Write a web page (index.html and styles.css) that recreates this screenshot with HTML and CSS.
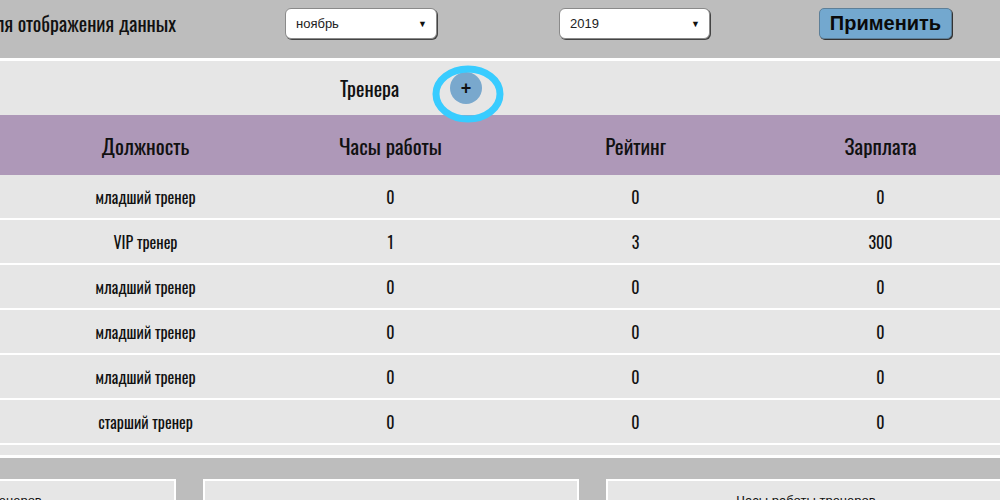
FILE: index.html
```html
<!DOCTYPE html>
<html lang="ru">
<head>
<meta charset="utf-8">
<title>Тренера</title>
<link rel="stylesheet" href="styles.css">
</head>
<body>
<div class="page">
  <header class="topbar">
    <div class="period"><span>Период для отображения данных</span></div>
    <div class="select select-month"><span>ноябрь</span><span class="arrow">▼</span></div>
    <div class="select select-year"><span>2019</span><span class="arrow">▼</span></div>
    <button class="apply">Применить</button>
  </header>

  <section class="trainers">
    <div class="title-row">
      <h2 class="title">Тренера</h2>
      <button class="add">+</button>
      <svg class="ring" width="80" height="66" viewBox="0 0 80 66" aria-hidden="true">
        <ellipse cx="39" cy="33" rx="32" ry="25" fill="none" stroke="#38ccff" stroke-width="7"/>
      </svg>
    </div>
    <table class="grid">
      <colgroup>
        <col class="c0"><col class="c"><col class="c"><col class="c"><col class="c">
      </colgroup>
      <thead>
        <tr><th></th><th>Должность</th><th>Часы работы</th><th>Рейтинг</th><th>Зарплата</th></tr>
      </thead>
      <tbody>
        <tr><td></td><td class="pos">младший тренер</td><td>0</td><td>0</td><td>0</td></tr>
        <tr><td></td><td class="pos">VIP тренер</td><td>1</td><td>3</td><td>300</td></tr>
        <tr><td></td><td class="pos">младший тренер</td><td>0</td><td>0</td><td>0</td></tr>
        <tr><td></td><td class="pos">младший тренер</td><td>0</td><td>0</td><td>0</td></tr>
        <tr><td></td><td class="pos">младший тренер</td><td>0</td><td>0</td><td>0</td></tr>
        <tr><td></td><td class="pos">старший тренер</td><td>0</td><td>0</td><td>0</td></tr>
      </tbody>
    </table>
  </section>

  <section class="charts">
    <div class="card card-1"><p>Рейтинг тренеров</p></div>
    <div class="card card-2"><p></p></div>
    <div class="card card-3"><p>Часы работы тренеров</p></div>
  </section>
</div>
</body>
</html>
```

FILE: styles.css
```css
html, body {
  margin: 0;
  padding: 0;
  overflow: hidden;
  background: #bdbdbd;
}
.page {
  width: 1000px;
  height: 500px;
  overflow: hidden;
  font-family: "Oswald", "Liberation Sans Narrow", "DejaVu Sans Condensed", "Roboto", sans-serif;
  color: #111;
}

/* top bar */
.topbar {
  height: 58px;
  background: #bdbdbd;
  display: flex;
  align-items: flex-start;
  padding-top: 8px;
  box-sizing: border-box;
}
.period {
  width: 176px;
  flex: none;
  display: flex;
  justify-content: flex-end;
  white-space: nowrap;
  font-size: 20px;
  line-height: 31px;
  color: #111;
}
.select {
  flex: none;
  box-sizing: border-box;
  height: 31px;
  background: #fff;
  border: 1px solid #8a8a8a;
  border-radius: 6px;
  box-shadow: 1px 1px 0 #444;
  display: flex;
  align-items: center;
  justify-content: space-between;
  padding: 0 9px 0 10px;
  font-family: "Liberation Sans", Arial, sans-serif;
  font-size: 13px;
  color: #222;
}
.select .arrow {
  font-size: 9px;
  color: #111;
}
.select-month { width: 152px; margin-left: 109px; }
.select-year { width: 151px; margin-left: 122px; }
.apply {
  flex: none;
  margin-left: 109px;
  width: 133px;
  height: 31px;
  box-sizing: border-box;
  background: #73a8cf;
  border: 1px solid #5d7f98;
  border-radius: 5px;
  box-shadow: 1px 1px 0 #333;
  font-family: "Liberation Sans", Arial, sans-serif;
  font-weight: bold;
  font-size: 20px;
  color: #0a0a0a;
  padding: 0;
}

/* trainers section */
.trainers {
  background: #e6e6e6;
  border-top: 3px solid #fff;
  border-bottom: 3px solid #fff;
  padding-bottom: 10px;
}
.title-row {
  position: relative;
  height: 54px;
  display: flex;
  align-items: center;
  padding-left: 340px;
}
.title {
  margin: 0;
  font-size: 20px;
  font-weight: normal;
  width: 110px;
}
.add {
  width: 32px;
  height: 32px;
  border-radius: 50%;
  border: none;
  background: #79a8cd;
  color: #111;
  font-family: "Liberation Sans", Arial, sans-serif;
  font-weight: bold;
  font-size: 18px;
  line-height: 32px;
  padding: 0;
  margin-top: -1px;
}
.ring {
  position: absolute;
  left: 429px;
  top: 0;
  z-index: 2;
}

.grid {
  border-collapse: collapse;
  table-layout: fixed;
  width: 1003px;
}
.grid col.c0 { width: 23px; }
.grid col.c { width: 245px; }
.grid th {
  background: #ae98b8;
  height: 60px;
  padding: 0;
  font-weight: normal;
  font-size: 21px;
  text-align: center;
}
.grid td {
  height: 43px;
  padding: 0;
  border-bottom: 2px solid #fff;
  text-align: center;
  font-size: 16px;
}

/* charts */
.charts {
  display: flex;
  gap: 27px;
  padding-top: 21px;
  margin-left: -200px;
}
.card {
  flex: none;
  box-sizing: border-box;
  width: 376px;
  height: 80px;
  background: #e6e6e6;
  border: 2px solid #fff;
}
.card-3 { width: 400px; }
.card p {
  margin: 12px 0 0;
  text-align: center;
  font-family: "Liberation Sans", Arial, sans-serif;
  font-size: 13px;
  color: #111;
}
```
